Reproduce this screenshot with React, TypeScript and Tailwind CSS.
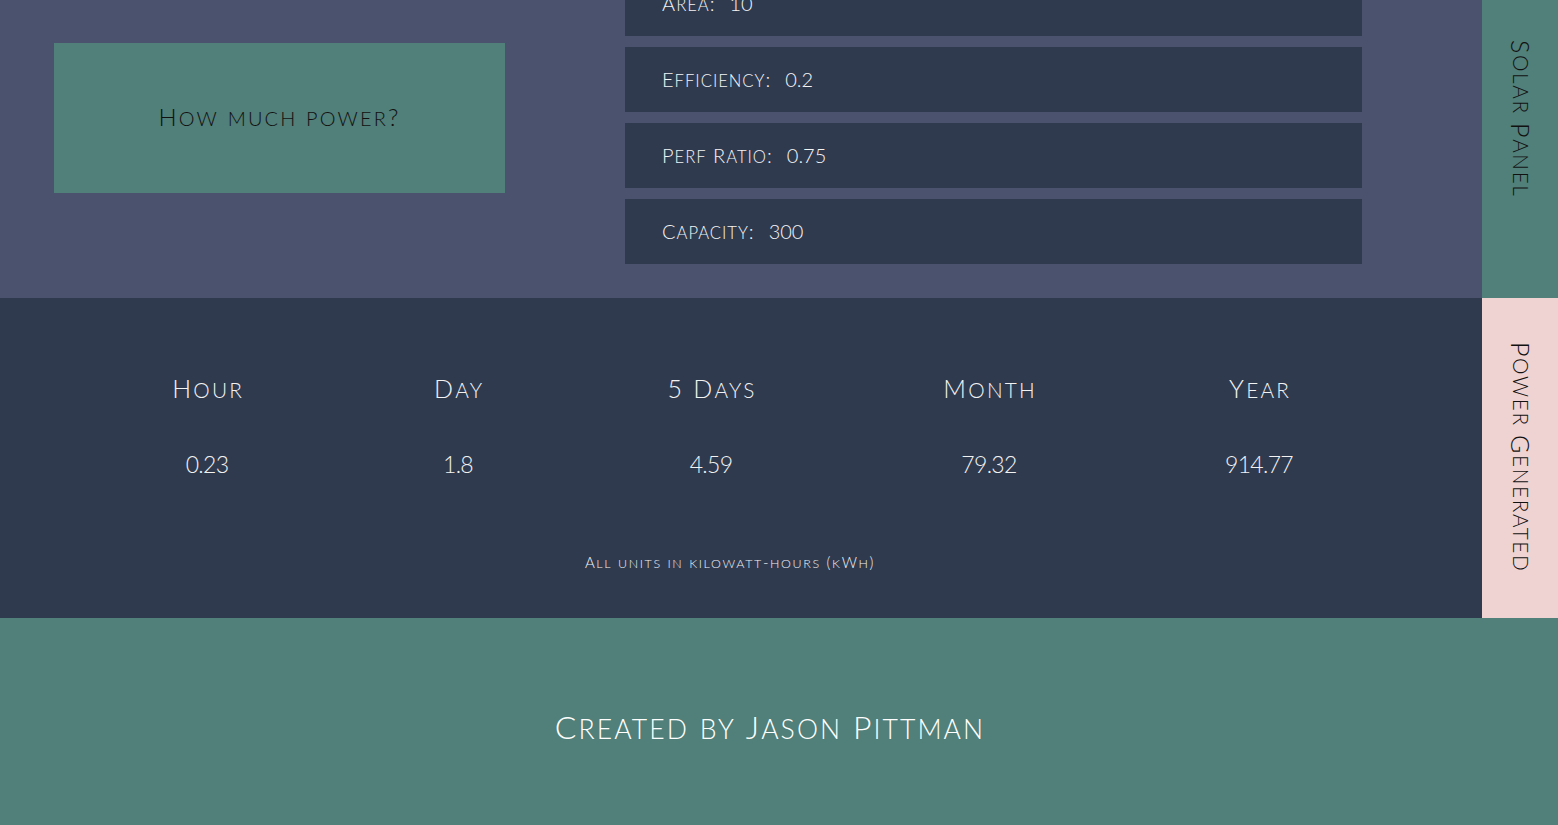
import React from "react";

const inputs = [
  { label: "Area", value: "10" },
  { label: "Efficiency", value: "0.2" },
  { label: "Perf Ratio", value: "0.75" },
  { label: "Capacity", value: "300" },
];

const outputs = [
  { label: "Hour", value: "0.23" },
  { label: "Day", value: "1.8" },
  { label: "5 Days", value: "4.59" },
  { label: "Month", value: "79.32" },
  { label: "Year", value: "914.77" },
];

// lowercase letters drawn as slightly smaller capitals
function Caps({ text }: { text: string }) {
  const parts = text.match(/[a-z]+|[^a-z]+/g) || [];
  return (
    <span>
      {parts.map((p, i) =>
        /[a-z]/.test(p) ? (
          <span key={i} className="uppercase text-[0.83em]">
            {p}
          </span>
        ) : (
          <span key={i}>{p}</span>
        )
      )}
    </span>
  );
}

function SideTab({ text, className }: { text: string; className: string }) {
  return (
    <div className={`w-[76px] shrink-0 flex justify-center ${className}`}>
      <span className="[writing-mode:vertical-rl] text-[25px] leading-none tracking-[0.065em] text-[#111]">
        <Caps text={text} />
      </span>
    </div>
  );
}

export default function App() {
  return (
    <div className="w-[1558px] h-[825px] overflow-hidden font-['Lato',sans-serif] font-light">
      {/* inputs */}
      <section className="flex h-[298px] bg-[#4a526e]">
        <div className="flex flex-1">
          <div className="pl-[54px] pt-[43px] w-[625px] shrink-0">
            <div className="w-[451px] h-[150px] bg-[#517f79] flex items-center justify-center pb-[2px] text-[24px] tracking-[0.09em] text-[#111]">
              <Caps text="How much power?" />
            </div>
          </div>
          <div className="w-[737px] -mt-[29px] flex flex-col gap-[11px]">
            {inputs.map((i) => (
              <div key={i.label} className="h-[65px] shrink-0 bg-[#2f3a4f] flex items-center pl-[37px] pb-[2px] text-[20px] text-[#f4f4f4]">
                <span className="tracking-[0.05em]">
                  <Caps text={i.label + ":"} />
                </span>
                <span className="ml-[14px]">{i.value}</span>
              </div>
            ))}
          </div>
        </div>
        <SideTab text="Solar Panel" className="bg-[#517f79] pt-[40px]" />
      </section>

      {/* results */}
      <section className="flex h-[320px] bg-[#2f3a4f]">
        <div className="flex-1 flex flex-col text-[#f2f2f2]">
          <div className="grid grid-cols-[250px_252px_254px_302px_238px] pl-[82px] pt-[72px]">
            {outputs.map((o) => (
              <div key={o.label} className="flex flex-col items-center">
                <div className="text-[25px] leading-[36px] tracking-[0.09em] pl-[0.09em]">
                  <Caps text={o.label} />
                </div>
                <div className="mt-[38px] text-[23px] leading-[36px] tracking-[-0.03em]">{o.value}</div>
              </div>
            ))}
          </div>
          <div className="mt-[69px] pr-[22px] text-center text-[15px] tracking-[0.11em]">
            <Caps text="All units in kilowatt-hours (kWh)" />
          </div>
        </div>
        <SideTab text="Power Generated" className="bg-[#efd3d3] pt-[44px]" />
      </section>

      {/* footer */}
      <footer className="h-[207px] bg-[#517f79] flex items-center justify-center pt-[10px] pl-[2px] pr-[20px]">
        <span className="text-[32px] tracking-[0.065em] text-white">
          <Caps text="Created by Jason Pittman" />
        </span>
      </footer>
    </div>
  );
}
